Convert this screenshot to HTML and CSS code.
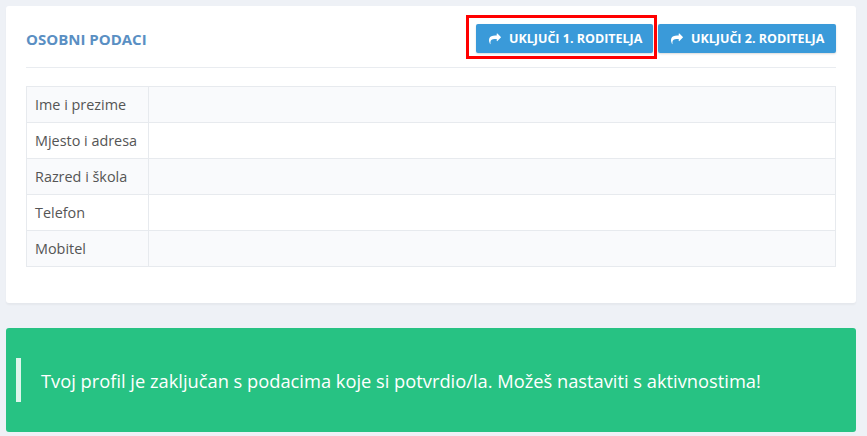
FILE: index.html
```html
<!DOCTYPE html>
<html lang="hr">
<head>
<meta charset="utf-8">
<title>Osobni podaci</title>
<link rel="stylesheet" href="styles.css">
</head>
<body>
<main class="page">
  <section class="card">
    <header class="card-head">
      <h2 class="card-title">OSOBNI PODACI</h2>
      <div class="actions">
        <span class="highlight-wrap">
          <button class="btn" type="button">
            <svg class="btn-icon" viewBox="0 0 1792 1792" aria-hidden="true"><path d="M1792 640q0 26-19 45l-512 512q-19 19-45 19t-45-19-19-45v-256h-224q-98 0-175.5 6t-154 21.5-133 42.5-105.5 69.5-80 101-48.5 138.5-17.5 181q0 55 5 123 0 6 2.5 23.5t2.5 26.5q0 15-8.5 25t-23.5 10q-16 0-28-17-7-9-13-22t-13.5-30-10.5-24q-127-285-127-451 0-199 53-333 162-403 875-403h224v-256q0-26 19-45t45-19 45 19l512 512q19 19 19 45z"/></svg>
            UKLJUČI 1. RODITELJA
          </button>
          <span class="highlight"></span>
        </span>
        <button class="btn" type="button">
          <svg class="btn-icon" viewBox="0 0 1792 1792" aria-hidden="true"><path d="M1792 640q0 26-19 45l-512 512q-19 19-45 19t-45-19-19-45v-256h-224q-98 0-175.5 6t-154 21.5-133 42.5-105.5 69.5-80 101-48.5 138.5-17.5 181q0 55 5 123 0 6 2.5 23.5t2.5 26.5q0 15-8.5 25t-23.5 10q-16 0-28-17-7-9-13-22t-13.5-30-10.5-24q-127-285-127-451 0-199 53-333 162-403 875-403h224v-256q0-26 19-45t45-19 45 19l512 512q19 19 19 45z"/></svg>
          UKLJUČI 2. RODITELJA
        </button>
      </div>
    </header>
    <table class="info">
      <tbody>
        <tr><th>Ime i prezime</th><td></td></tr>
        <tr><th>Mjesto i adresa</th><td></td></tr>
        <tr><th>Razred i škola</th><td></td></tr>
        <tr><th>Telefon</th><td></td></tr>
        <tr><th>Mobitel</th><td></td></tr>
      </tbody>
    </table>
  </section>
  <div class="alert">
    <span class="alert-bar"></span>
    <p class="alert-text">Tvoj profil je zaključan s podacima koje si potvrdio/la. Možeš nastaviti s aktivnostima!</p>
  </div>
</main>
</body>
</html>
```
FILE: styles.css
```css
* { box-sizing: border-box; }
html, body { margin: 0; padding: 0; }
body {
  background: #eef1f6;
  font-family: "Open Sans", "Noto Sans", sans-serif;
  padding: 6px;
}
.page { width: 850px; }
.card {
  background: #fff;
  border-radius: 3px;
  box-shadow: 0 2px 2px rgba(0, 0, 0, 0.04);
  padding: 0 20px 36px;
}
.card-head {
  display: flex;
  align-items: center;
  justify-content: space-between;
  padding: 18px 0 14px;
  border-bottom: 1px solid #e9ecf0;
}
.card-title {
  margin: 0;
  font-size: 15px;
  font-weight: 700;
  color: #5a8fc3;
}
.actions { display: flex; gap: 5px; }
.highlight-wrap { position: relative; display: flex; }
.highlight {
  position: absolute;
  left: -10px; right: -4px; top: -9px; bottom: -6px;
  border: 3px solid #f00;
  pointer-events: none;
}
.btn {
  display: flex;
  align-items: center;
  gap: 8px;
  height: 29px;
  width: 177px;
  padding: 0 0 0 13px;
  border: 0;
  border-radius: 2px;
  background: #3a9ad9;
  color: #fff;
  font-family: inherit;
  font-size: 12.5px;
  font-weight: 700;
  box-shadow: 0 1px 2px rgba(0, 0, 0, 0.15);
}
.actions > .btn { width: 178px; }
.btn-icon { width: 12px; height: 12px; fill: #fff; flex: none; }
.info {
  width: 100%;
  margin-top: 18px;
  border-collapse: collapse;
  border: 1px solid #e7eaee;
}
.info th, .info td {
  height: 36px;
  border: 1px solid #e7eaee;
  padding: 0 8px;
  font-size: 14.4px;
  font-weight: 400;
  color: #555;
  text-align: left;
}
.info th { width: 122px; }
.info tr:nth-child(odd) { background: #f9fafc; }
.alert {
  margin-top: 25px;
  background: #27c283;
  border-radius: 3px;
  padding: 30px 10px;
  display: flex;
  align-items: center;
  gap: 20px;
}
.alert-bar {
  width: 5px;
  height: 44px;
  background: rgba(255, 255, 255, 0.85);
  flex: none;
}
.alert-text {
  margin: 0;
  color: #fff;
  font-size: 18.3px;
}
```
